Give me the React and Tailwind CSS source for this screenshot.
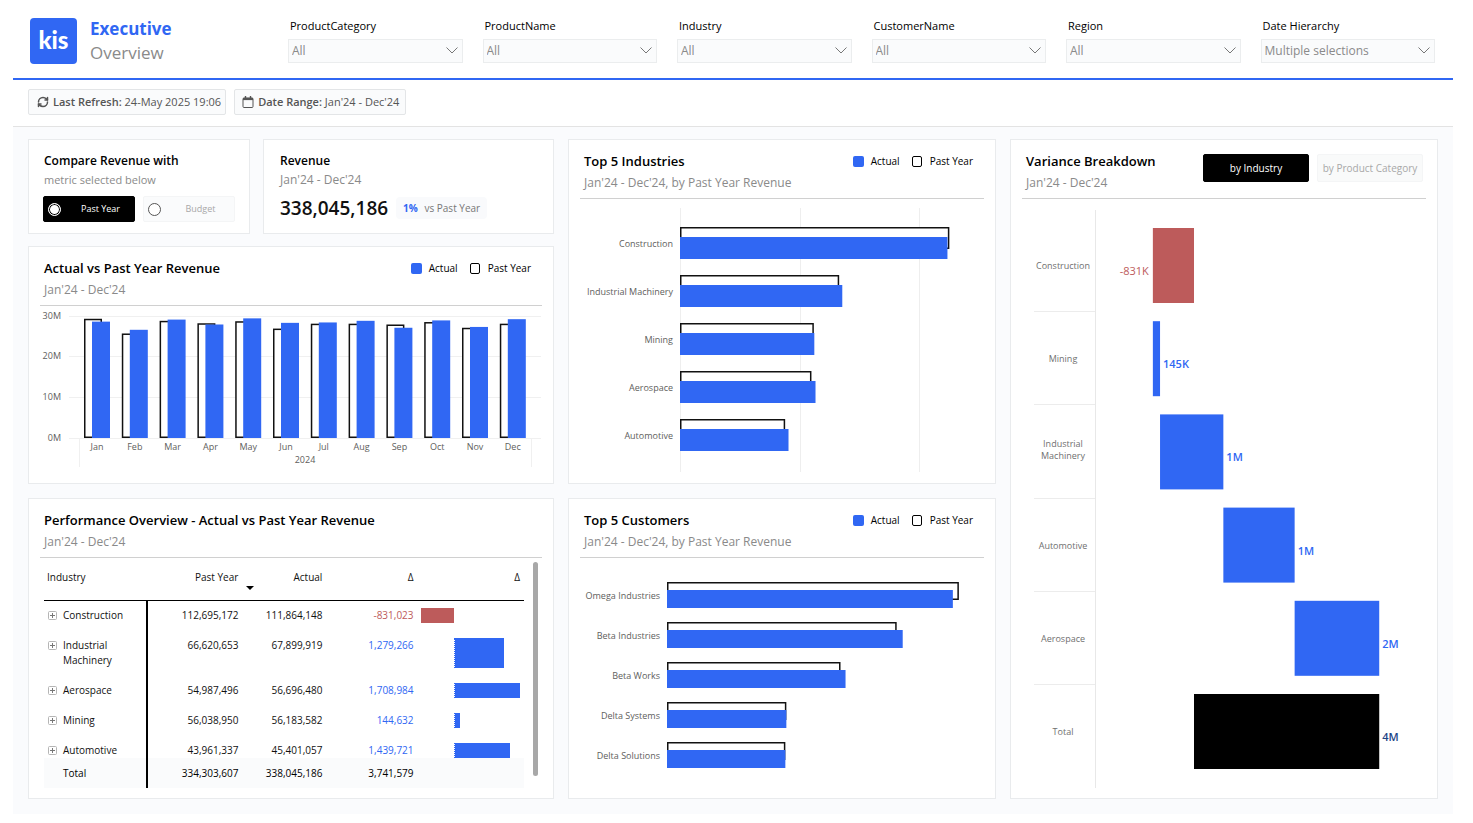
import { useState } from 'react';
import { LuRefreshCw } from 'react-icons/lu';

const FILTERS = [
  { id: 'category', label: 'ProductCategory', value: 'All' },
  { id: 'product', label: 'ProductName', value: 'All' },
  { id: 'industry', label: 'Industry', value: 'All' },
  { id: 'customer', label: 'CustomerName', value: 'All' },
  { id: 'region', label: 'Region', value: 'All' },
  { id: 'date', label: 'Date Hierarchy', value: 'Multiple selections' },
];

// revenue in millions
const MONTHS = [
  { name: 'Jan', actual: 28.5, past: 29.2 },
  { name: 'Feb', actual: 26.5, past: 25.6 },
  { name: 'Mar', actual: 29.0, past: 28.7 },
  { name: 'Apr', actual: 27.8, past: 28.1 },
  { name: 'May', actual: 29.3, past: 28.6 },
  { name: 'Jun', actual: 28.2, past: 26.8 },
  { name: 'Jul', actual: 28.3, past: 28.0 },
  { name: 'Aug', actual: 28.7, past: 28.0 },
  { name: 'Sep', actual: 27.0, past: 27.8 },
  { name: 'Oct', actual: 28.8, past: 28.4 },
  { name: 'Nov', actual: 27.2, past: 27.0 },
  { name: 'Dec', actual: 29.1, past: 28.0 },
];

const INDUSTRIES = [
  { name: 'Construction', actual: 111.9, past: 112.7 },
  { name: 'Industrial Machinery', actual: 67.9, past: 66.6 },
  { name: 'Mining', actual: 56.2, past: 56.0 },
  { name: 'Aerospace', actual: 56.7, past: 55.0 },
  { name: 'Automotive', actual: 45.4, past: 44.0 },
];

const CUSTOMERS = [
  { name: 'Omega Industries', actual: 28.5, past: 29.1 },
  { name: 'Beta Industries', actual: 23.5, past: 22.9 },
  { name: 'Beta Works', actual: 17.8, past: 17.3 },
  { name: 'Delta Systems', actual: 11.9, past: 11.9 },
  { name: 'Delta Solutions', actual: 11.8, past: 11.8 },
];

const ROWS = [
  { name: 'Construction', past: '112,695,172', actual: '111,864,148', delta: -831023 },
  { name: 'Industrial Machinery', past: '66,620,653', actual: '67,899,919', delta: 1279266 },
  { name: 'Aerospace', past: '54,987,496', actual: '56,696,480', delta: 1708984 },
  { name: 'Mining', past: '56,038,950', actual: '56,183,582', delta: 144632 },
  { name: 'Automotive', past: '43,961,337', actual: '45,401,057', delta: 1439721 },
];

const VARIANCE = [
  { lines: ['Construction'], from: -831, to: 0, label: '-831K', color: '#bd5b5b', text: '#bd5b5b' },
  { lines: ['Mining'], from: -831, to: -686, label: '145K', color: '#3067f3', text: '#3067f3' },
  { lines: ['Industrial', 'Machinery'], from: -686, to: 593, label: '1M', color: '#3067f3', text: '#3067f3' },
  { lines: ['Automotive'], from: 593, to: 2033, label: '1M', color: '#3067f3', text: '#3067f3' },
  { lines: ['Aerospace'], from: 2033, to: 3742, label: '2M', color: '#3067f3', text: '#3067f3' },
  { lines: ['Total'], from: 0, to: 3742, label: '4M', color: '#000000', text: '#1c4587' },
];

function Filter({ id, label, value }) {
  return (
    <div className="min-w-0">
      <label htmlFor={id} className="block px-0.5 text-[11px] leading-4 font-medium text-black">
        {label}
      </label>
      <div className="relative mt-[3px]">
        <select
          id={id}
          defaultValue={value}
          className="h-6 w-full appearance-none border border-[#ebedee] bg-[#fafbfc] pr-6 pl-[3px] text-xs text-[#8a8a8a]"
        >
          <option>{value}</option>
        </select>
        <svg
          viewBox="0 0 12 7"
          className="pointer-events-none absolute top-[10px] right-[5px] w-3"
          fill="none"
          stroke="#777"
        >
          <path d="M0.5 0.5 6 6 11.5 0.5" />
        </svg>
      </div>
    </div>
  );
}

function Legend() {
  return (
    <div className="mr-[11px] flex items-center text-[10px] leading-[22px] text-black">
      <span className="mr-[7px] size-[11px] rounded-[2px] bg-[#3067f3]" />
      Actual
      <span className="mr-2 ml-3 h-[11px] w-[10px] rounded-[2px] border border-black" />
      Past Year
    </div>
  );
}

function Card({ title, subtitle, action, className = '', children }) {
  return (
    <section className={`flex flex-col border border-[#e9ebed] bg-white ${className}`}>
      <header className="mx-[11px] flex items-start justify-between border-b border-[#d0d0d0] pt-[10px] pb-1 pl-1">
        <div>
          <h2 className="text-[13px] leading-[22px] font-semibold text-black">{title}</h2>
          <p className="text-xs leading-[22px] text-[#8a8a8a]">{subtitle}</p>
        </div>
        {action}
      </header>
      {children}
    </section>
  );
}

function MonthlyChart() {
  const base = 132;
  const scale = 4.083;
  return (
    <svg viewBox="0 0 524 177" className="block w-full text-[9px]" fill="#605e5c">
      {[0, 10, 20, 30].map((m) => (
        <g key={m}>
          <path d={`M40 ${Math.round(base - m * scale) + 0.5}H512`} stroke="#f0f0f0" />
          <text x="32" y={Math.round(base - m * scale) + 3} textAnchor="end">
            {m}M
          </text>
        </g>
      ))}
      <path d="M50.5 132V161M502.5 132V161" stroke="#f0f0f0" />
      {MONTHS.map((m, i) => {
        const x = 55 + i * 37.8;
        return (
          <g key={m.name}>
            <rect
              x={x + 0.75}
              y={base - m.past * scale + 0.75}
              width="16.5"
              height={m.past * scale - 1.5}
              fill="#fff"
              stroke="#111"
              strokeWidth="1.5"
            />
            <rect x={x + 8} y={base - m.actual * scale} width="18" height={m.actual * scale} fill="#3067f3" />
            <text x={x + 13} y="144" textAnchor="middle">
              {m.name}
            </text>
          </g>
        );
      })}
      <text x="276" y="157" textAnchor="middle">
        2024
      </text>
    </svg>
  );
}

function BarChart({ data, height, left, top, pitch, thickness, offset, scale, grid = [] }) {
  return (
    <svg viewBox={`0 0 426 ${height}`} className="block w-full text-[9px]" fill="#605e5c">
      {grid.map((x) => (
        <path key={x} d={`M${x} 9V273`} stroke="#eeeeee" />
      ))}
      {data.map((d, i) => {
        const y = top + i * pitch;
        return (
          <g key={d.name}>
            <rect
              x={left + 0.75}
              y={y + 0.75}
              width={d.past * scale - 1.5}
              height={thickness - 1.5}
              fill="#fff"
              stroke="#111"
              strokeWidth="1.5"
            />
            <rect x={left} y={y + offset} width={d.actual * scale} height={thickness} fill="#3067f3" />
            <text x={left - 7} y={y + (thickness + offset) / 2 + 4} textAnchor="end">
              {d.name}
            </text>
          </g>
        );
      })}
    </svg>
  );
}

function VarianceChart() {
  const pitch = 93.2;
  const px = (v) => 183 + v * 0.0495;
  return (
    <svg viewBox="0 0 426 599" className="block w-full" fill="#6f6f6f">
      <path d="M84.5 11V589" stroke="#e8e8e8" />
      {VARIANCE.map((v, i) => {
        const y = 29 + i * pitch;
        const negative = v.to === 0;
        return (
          <g key={v.lines[0]}>
            {i > 0 && <path d={`M23 ${Math.round(y - 10) + 0.5}H84`} stroke="#ececec" />}
            <rect x={px(v.from)} y={y} width={px(v.to) - px(v.from)} height="75" fill={v.color} />
            {v.lines.map((line, n) => (
              <text
                key={line}
                x="52"
                y={y + 41 + n * 12 - (v.lines.length - 1) * 8}
                textAnchor="middle"
                className="text-[9px]"
              >
                {line}
              </text>
            ))}
            <text
              x={negative ? px(v.from) - 4 : px(v.to) + 3}
              y={y + 47}
              textAnchor={negative ? 'end' : 'start'}
              fill={v.text}
              className={negative ? 'text-[11px]' : 'text-[11px] font-semibold'}
            >
              {v.label}
            </text>
          </g>
        );
      })}
    </svg>
  );
}

function DeltaBar({ delta }) {
  return (
    <div className="flex h-full">
      <div className="w-1/3">{delta < 0 && <div className="h-full bg-[#bd5b5b]" />}</div>
      <div className={`flex-1 ${delta > 0 ? 'border-l border-dotted border-[#3067f3]' : ''}`}>
        {delta > 0 && <div className="h-full bg-[#3067f3]" style={{ width: `${(delta / 1708984) * 100}%` }} />}
      </div>
    </div>
  );
}

function PerformanceTable() {
  return (
    <div className="flex gap-[9px] pt-1 pr-[15px] pl-[15px]">
      <table className="h-[226px] min-w-0 flex-1 table-fixed border-collapse text-right text-[10px] leading-[15px] text-[#111]">
        <colgroup>
          <col className="w-[21.5%]" />
          <col className="w-[19%]" />
          <col className="w-[17.5%]" />
          <col className="w-[19%]" />
          <col className="w-[23%]" />
        </colgroup>
        <thead>
          <tr className="h-[38px] border-b border-black">
            <th className="pb-[7px] pl-[3px] text-left font-normal">Industry</th>
            <th className="relative pb-[7px] font-normal">
              Past Year
              <svg viewBox="0 0 8 4" className="absolute right-[-16px] bottom-[10px] w-2">
                <path d="M0 0H8L4 4Z" />
              </svg>
            </th>
            <th className="pb-[7px] font-normal">Actual</th>
            <th className="pb-[7px] font-normal">Δ</th>
            <th className="pr-1 pb-[7px] font-normal">Δ</th>
          </tr>
        </thead>
        <tbody>
          {ROWS.map((row, i) => {
            const pad = i === ROWS.length - 1 ? 'pt-[7px] pb-0' : 'pt-[7px] pb-2';
            return (
              <tr key={row.name} className="align-top">
                <td className={`border-r-2 border-black pl-1 text-left ${pad}`}>
                  <div className="flex items-start gap-1.5">
                    <button type="button" aria-label={`Expand ${row.name}`} className="mt-[3px] shrink-0">
                      <svg viewBox="0 0 9 9" className="size-[9px]" fill="none" stroke="#b5b5b5">
                        <rect x="0.5" y="0.5" width="8" height="8" rx="1" />
                        <path d="M2 4.5H7M4.5 2V7" stroke="#777" />
                      </svg>
                    </button>
                    <span className="w-16">{row.name}</span>
                  </div>
                </td>
                <td className={pad}>{row.past}</td>
                <td className={pad}>{row.actual}</td>
                <td className={`${pad} ${row.delta < 0 ? 'text-[#bd5b5b]' : 'text-[#3067f3]'}`}>
                  {row.delta.toLocaleString('en-US')}
                </td>
                <td className={`h-px pr-1 pl-[7px] ${pad}`}>
                  <DeltaBar delta={row.delta} />
                </td>
              </tr>
            );
          })}
        </tbody>
        <tfoot>
          <tr className="h-[30px] bg-[#fafbfc] font-medium text-black">
            <td className="border-r-2 border-black pl-[19px] text-left">Total</td>
            <td>334,303,607</td>
            <td>338,045,186</td>
            <td>3,741,579</td>
            <td />
          </tr>
        </tfoot>
      </table>
      <div className="h-[214px] w-[5px] rounded-full bg-[#a8a8a8]" />
    </div>
  );
}

function CompareOption({ label, checked, onChange }) {
  return (
    <label
      className={`flex h-[26px] flex-1 items-center rounded-[2px] border pl-1 text-[9px] font-medium ${
        checked ? 'border-black bg-black text-white' : 'border-[#f4f5f6] bg-[#fafbfc] text-[#a8a8a8]'
      }`}
    >
      <input
        type="radio"
        name="compare"
        checked={checked}
        onChange={onChange}
        className="size-[13px] shrink-0 appearance-none rounded-full border border-[#555] bg-white checked:border-white checked:shadow-[inset_0_0_0_1px_black]"
      />
      <span className="flex-1 pl-1.5 text-center">{label}</span>
    </label>
  );
}

export default function App() {
  const [compare, setCompare] = useState('Past Year');
  const [breakdown, setBreakdown] = useState('by Industry');

  return (
    <div className="mr-5 ml-[13px] bg-white font-['Open_Sans','Noto_Sans',sans-serif]">
      <header className="flex items-start border-b-2 border-[#3067f3] pr-[18px] pb-[13px] pl-[17px]">
        <div className="mt-[18px] flex h-[46px] w-[47px] items-center justify-center rounded-[4px] bg-[#3067f3] pb-0.5 font-['Lato','Open_Sans',sans-serif] text-2xl font-black text-white">
          kis
        </div>
        <h1 className="mt-[17px] ml-[13px] w-[198px] text-[17px] leading-6 text-[#8a8a8a]">
          <span className="block font-bold text-[#3067f3]">Executive</span>
          Overview
        </h1>
        <div className="mt-[18px] grid flex-1 grid-cols-6 gap-5">
          {FILTERS.map((filter) => (
            <Filter key={filter.id} {...filter} />
          ))}
        </div>
      </header>

      <div className="flex gap-2 border-b border-[#e3e3e3] px-[15px] pt-[9px] pb-[11px] text-[11px] text-[#555]">
        <div className="flex h-[26px] items-center gap-1 rounded-[2px] border border-[#e3e5e7] bg-[#fafbfc] pr-1 pl-2">
          <LuRefreshCw size={12} strokeWidth={3} />
          <span>
            <b className="font-semibold">Last Refresh:</b> 24-May 2025 19:06
          </span>
        </div>
        <div className="flex h-[26px] items-center gap-1 rounded-[2px] border border-[#e3e5e7] bg-[#fafbfc] pr-1.5 pl-[7px]">
          <svg viewBox="0 0 12 12" className="size-3" fill="none" stroke="#555">
            <rect x="1" y="2" width="10" height="9.5" rx="1" />
            <path d="M3.5 0V2M8.5 0V2" strokeWidth="1.4" />
            <path d="M1 3H11" strokeWidth="2.2" />
          </svg>
          <span>
            <b className="font-semibold">Date Range:</b> Jan'24 - Dec'24
          </span>
        </div>
      </div>

      <main className="grid grid-cols-[526fr_428fr_428fr] gap-[14px] bg-[#fafbfd] px-[15px] pt-3 pb-[15px]">
        <div className="flex flex-col">
          <div className="mb-3 grid grid-cols-[222fr_291fr] gap-[13px]">
            <section className="border border-[#e9ebed] bg-white px-[14px] pt-[11px] pb-[11px]">
              <h2 className="px-px text-xs leading-5 font-semibold text-black">Compare Revenue with</h2>
              <p className="px-px text-[11px] leading-[18px] text-[#8a8a8a]">metric selected below</p>
              <div className="mt-[7px] flex gap-2">
                {['Past Year', 'Budget'].map((name) => (
                  <CompareOption
                    key={name}
                    label={name}
                    checked={compare === name}
                    onChange={() => setCompare(name)}
                  />
                ))}
              </div>
            </section>
            <section className="border border-[#e9ebed] bg-white px-4 pt-[11px]">
              <h2 className="text-xs leading-5 font-semibold text-black">Revenue</h2>
              <p className="text-xs leading-[18px] text-[#8a8a8a]">Jan'24 - Dec'24</p>
              <div className="mt-[7px] flex items-center gap-2">
                <span className="text-[19px] leading-6 font-semibold text-[#111]">338,045,186</span>
                <span className="rounded-[4px] bg-[#f9fafc] px-[7px] text-[10px] leading-[22px] text-[#777]">
                  <b className="mr-1 font-bold text-[#3067f3]">1%</b> vs Past Year
                </span>
              </div>
            </section>
          </div>
          <Card title="Actual vs Past Year Revenue" subtitle="Jan'24 - Dec'24" action={<Legend />} className="mb-[14px]">
            <MonthlyChart />
          </Card>
          <Card
            title="Performance Overview - Actual vs Past Year Revenue"
            subtitle="Jan'24 - Dec'24"
            className="flex-1"
          >
            <PerformanceTable />
          </Card>
        </div>

        <div className="flex flex-col gap-[14px]">
          <Card title="Top 5 Industries" subtitle="Jan'24 - Dec'24, by Past Year Revenue" action={<Legend />}>
            <BarChart
              data={INDUSTRIES}
              height={284}
              left={111}
              top={28}
              pitch={48}
              thickness={22}
              offset={10}
              scale={2.39}
              grid={[111.5, 231.5, 350.5]}
            />
          </Card>
          <Card
            title="Top 5 Customers"
            subtitle="Jan'24 - Dec'24, by Past Year Revenue"
            action={<Legend />}
            className="flex-1"
          >
            <BarChart
              data={CUSTOMERS}
              height={240}
              left={98}
              top={24}
              pitch={40}
              thickness={18}
              offset={8}
              scale={10.03}
            />
          </Card>
        </div>

        <Card
          title="Variance Breakdown"
          subtitle="Jan'24 - Dec'24"
          action={
            <div className="mt-1 mr-[3px] flex gap-2">
              {['by Industry', 'by Product Category'].map((name) => (
                <button
                  key={name}
                  type="button"
                  onClick={() => setBreakdown(name)}
                  className={`h-7 w-[106px] rounded-[2px] border text-[10px] whitespace-nowrap ${
                    breakdown === name
                      ? 'border-black bg-black font-medium text-white'
                      : 'border-[#f4f5f6] bg-[#f9fafa] text-[#a8a8a8]'
                  }`}
                >
                  {name}
                </button>
              ))}
            </div>
          }
        >
          <VarianceChart />
        </Card>
      </main>
    </div>
  );
}
